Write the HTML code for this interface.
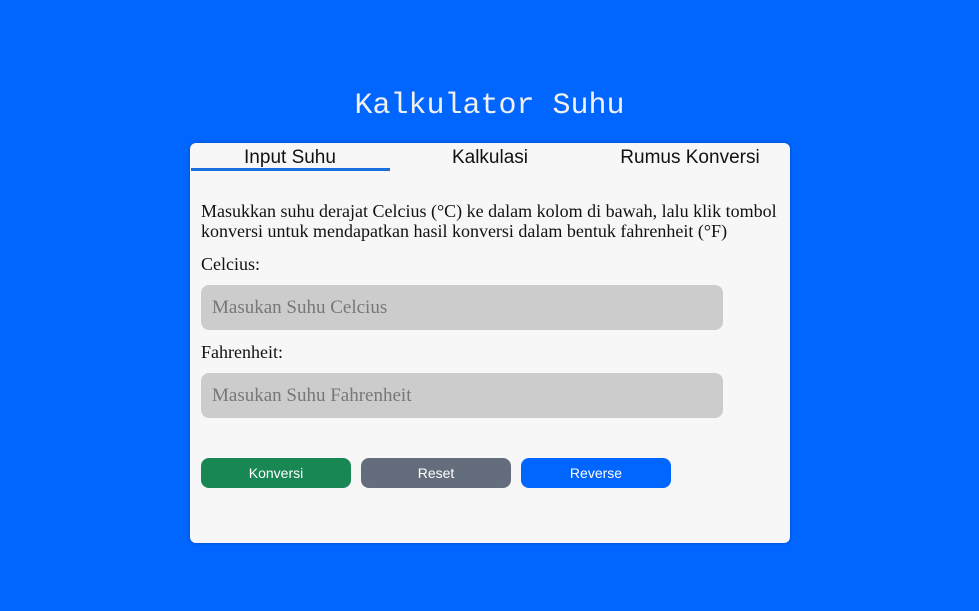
<!DOCTYPE html>
<html><head><meta charset="utf-8"><style>
body{margin:0;width:979px;height:611px;background:#0066ff;position:relative;overflow:hidden;font-family:"Liberation Serif",serif}
.t{position:absolute;top:89px;left:0;width:979px;text-align:center;color:#f0f0f0;font:30px "Liberation Mono",monospace}
.card{position:absolute;left:190px;top:143px;width:600px;height:400px;background:#f7f7f7;border-radius:6px;box-shadow:0 0 3px rgba(0,0,0,.3)}
.tab{position:absolute;top:4px;width:200px;text-align:center;font:19px "Liberation Sans",sans-serif;color:#111}
.ul{position:absolute;left:1px;top:25px;width:199px;height:3px;background:#1a6fe0}
.p{position:absolute;left:11px;top:58px;width:585px;font-size:18px;line-height:20px;color:#111}
.l{position:absolute;left:11px;font-size:18px;color:#111}
.in{position:absolute;left:11px;height:45px;background:#ccc;border-radius:8px;color:#777;font-size:19px;line-height:45px;padding-left:11px;box-sizing:border-box;width:522px}
.b{position:absolute;top:315px;width:150px;height:30px;border-radius:8px;color:#fff;font:14px "Liberation Sans",sans-serif;text-align:center;line-height:30px}
</style></head><body>
<div class="t">Kalkulator Suhu</div>
<div class="card">
<div class="tab" style="left:0">Input Suhu</div>
<div class="tab" style="left:200px">Kalkulasi</div>
<div class="tab" style="left:400px">Rumus Konversi</div>
<div class="ul"></div>
<div class="p">Masukkan suhu derajat Celcius (°C) ke dalam kolom di bawah, lalu klik tombol konversi untuk mendapatkan hasil konversi dalam bentuk fahrenheit (°F)</div>
<div class="l" style="top:111px">Celcius:</div>
<div class="in" style="top:142px">Masukan Suhu Celcius</div>
<div class="l" style="top:199px">Fahrenheit:</div>
<div class="in" style="top:230px">Masukan Suhu Fahrenheit</div>
<div class="b" style="left:11px;background:#198754">Konversi</div>
<div class="b" style="left:171px;background:#646d7b">Reset</div>
<div class="b" style="left:331px;background:#0066ff">Reverse</div>
</div>
</body></html>
